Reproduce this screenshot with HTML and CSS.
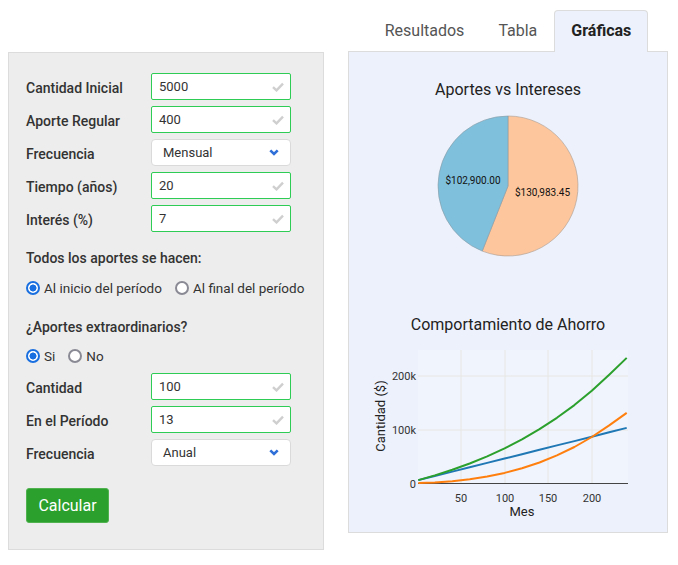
FILE: index.html
```html
<!DOCTYPE html>
<html lang="es">
<head>
<meta charset="utf-8">
<title>Calculadora de ahorro</title>
<link rel="stylesheet" href="styles.css">
</head>
<body>
<div class="page">
  <form class="form-panel">
    <div class="grid">
      <label class="lbl">Cantidad Inicial</label>
      <div class="field ok"><span>5000</span><svg class="check" viewBox="0 0 12 10"><path d="M1 5.2 L4.5 8.4 L11 1.6"/></svg></div>
      <label class="lbl">Aporte Regular</label>
      <div class="field ok"><span>400</span><svg class="check" viewBox="0 0 12 10"><path d="M1 5.2 L4.5 8.4 L11 1.6"/></svg></div>
      <label class="lbl">Frecuencia</label>
      <div class="field sel"><span>Mensual</span><svg class="chev" viewBox="0 0 10 7"><path d="M1.3 1.3 L5 5 L8.7 1.3"/></svg></div>
      <label class="lbl">Tiempo (años)</label>
      <div class="field ok"><span>20</span><svg class="check" viewBox="0 0 12 10"><path d="M1 5.2 L4.5 8.4 L11 1.6"/></svg></div>
      <label class="lbl">Interés (%)</label>
      <div class="field ok"><span>7</span><svg class="check" viewBox="0 0 12 10"><path d="M1 5.2 L4.5 8.4 L11 1.6"/></svg></div>
    </div>

    <div class="heading h1">Todos los aportes se hacen:</div>
    <div class="radios r1">
      <span class="radio on"></span><span class="rtxt">Al inicio del período</span>
      <span class="radio"></span><span class="rtxt">Al final del período</span>
    </div>

    <div class="heading h2">¿Aportes extraordinarios?</div>
    <div class="radios r2">
      <span class="radio on"></span><span class="rtxt">Si</span>
      <span class="radio"></span><span class="rtxt">No</span>
    </div>

    <div class="grid">
      <label class="lbl">Cantidad</label>
      <div class="field ok"><span>100</span><svg class="check" viewBox="0 0 12 10"><path d="M1 5.2 L4.5 8.4 L11 1.6"/></svg></div>
      <label class="lbl">En el Período</label>
      <div class="field ok"><span>13</span><svg class="check" viewBox="0 0 12 10"><path d="M1 5.2 L4.5 8.4 L11 1.6"/></svg></div>
      <label class="lbl">Frecuencia</label>
      <div class="field sel"><span>Anual</span><svg class="chev" viewBox="0 0 10 7"><path d="M1.3 1.3 L5 5 L8.7 1.3"/></svg></div>
    </div>

    <button type="button" class="btn">Calcular</button>
  </form>

  <div class="results">
    <div class="tabs">
      <div class="tab">Resultados</div>
      <div class="tab">Tabla</div>
      <div class="tab active">Gráficas</div>
    </div>
    <div class="panel">
      <div class="ctitle t1">Aportes vs Intereses</div>
      <svg class="pie" viewBox="349 100 318 215" width="318" height="215">
        <path d="M508 186 L508 116 A70 70 0 1 1 482.22 251.08 Z" fill="#fec69c" stroke="#a89a90" stroke-width="0.6"/>
        <path d="M508 186 L482.22 251.08 A70 70 0 0 1 508 116 Z" fill="#7fc0dc" stroke="#8a9aa4" stroke-width="0.6"/>
        <text x="473" y="183.5" class="plab">$102,900.00</text>
        <text x="542.5" y="196" class="plab">$130,983.45</text>
      </svg>
      <div class="ctitle t2">Comportamiento de Ahorro</div>
      <svg class="line" viewBox="349 335 318 190" width="318" height="190">
        <rect x="418" y="350" width="210" height="133" fill="#f0f4fd"/>
        <g class="grid-l">
          <line x1="461" y1="350" x2="461" y2="483"/>
          <line x1="505" y1="350" x2="505" y2="483"/>
          <line x1="548" y1="350" x2="548" y2="483"/>
          <line x1="592" y1="350" x2="592" y2="483"/>
          <line x1="418" y1="376" x2="628" y2="376"/>
          <line x1="418" y1="430" x2="628" y2="430"/>
        </g>
        <line x1="418" y1="483.5" x2="628" y2="483.5" stroke="#444" stroke-width="1"/>
        <g class="ytick">
          <text x="416" y="380">200k</text>
          <text x="416" y="434">100k</text>
          <text x="416" y="487.5">0</text>
        </g>
        <g class="xtick">
          <text x="461" y="502">50</text>
          <text x="505" y="502">100</text>
          <text x="548" y="502">150</text>
          <text x="592" y="502">200</text>
        </g>
        <text class="axl" x="522" y="516">Mes</text>
        <text class="axl" transform="translate(385 416) rotate(-90)" x="0" y="0">Cantidad ($)</text>
        <polyline class="s blue" points="418.3,480.1 434.8,476.0 452.3,471.6 469.7,467.3 487.2,462.9 504.6,458.5 522.0,454.2 539.5,449.8 556.9,445.4 574.4,441.1 591.8,436.7 609.2,432.3 626.7,427.9"/>
        <polyline class="s orange" points="418.3,483 434.8,482.4 452.3,481.2 469.7,479.2 487.2,476.5 504.6,472.9 522.0,468.2 539.5,462.5 556.9,455.4 574.4,447.0 591.8,437.0 609.2,425.4 626.7,412.9"/>
        <polyline class="s green" points="418.3,480.1 434.8,475.4 452.3,469.8 469.7,463.5 487.2,456.4 504.6,448.4 522.0,439.4 539.5,429.2 556.9,417.8 574.4,405.1 591.8,390.7 609.2,374.7 626.7,357.9"/>
      </svg>
    </div>
  </div>
</div>
</body>
</html>
```

FILE: styles.css
```css
* { box-sizing: border-box; }
html, body { margin: 0; padding: 0; background: #fff; }
body { font-family: Roboto, "Liberation Sans", Arial, sans-serif; color: #333; }

.page {
  display: flex;
  align-items: flex-start;
  gap: 24px;
  padding: 10px 0 0 8px;
}

/* ----- left form ----- */
.form-panel {
  width: 316px;
  height: 498px;
  margin-top: 42px;
  background: #ededed;
  border: 1px solid #dcdcdc;
  padding: 20px 17px 0 17px;
  display: flex;
  flex-direction: column;
  align-items: flex-start;
}
.grid {
  display: grid;
  grid-template-columns: 125px 140px;
  row-gap: 6px;
  align-items: center;
}
.lbl {
  font-size: 14px;
  font-weight: 500;
  color: #333;
  line-height: 20px;
  padding-top: 2px;
}
.field {
  height: 27px;
  background: #fff;
  border-radius: 2px;
  display: flex;
  align-items: center;
  justify-content: space-between;
  font-size: 13px;
  color: #333;
}
.field.ok {
  border: 1px solid #2ecc55;
  padding: 0 6px 0 7px;
}
.field.sel {
  border: 1px solid #dadada;
  border-radius: 4px;
  padding: 0 11px 0 11px;
}
.check { width: 12px; height: 10px; }
.check path { fill: none; stroke: #cfcfcf; stroke-width: 2.4; }
.chev { width: 10px; height: 7px; }
.chev path { fill: none; stroke: #2f6fd8; stroke-width: 2.6; }

.heading {
  font-size: 14px;
  font-weight: 500;
  line-height: 20px;
  color: #333;
}
.h1 { margin-top: 16px; }
.h2 { margin-top: 19px; }
.radios {
  display: flex;
  align-items: center;
  height: 20px;
  font-size: 13.5px;
  color: #333;
  white-space: nowrap;
  width: max-content;
}
.r1 { margin-top: 10px; }
.r2 { margin-top: 9px; margin-bottom: 7px; }
.radio {
  width: 14px;
  height: 14px;
  border-radius: 50%;
  border: 2px solid #8a8a95;
  background: #fff;
  margin-right: 4px;
  flex: none;
}
.radio.on {
  border-color: #1a6fe0;
  background: radial-gradient(circle, #1a6fe0 0 3.2px, #fff 3.8px);
}
.rtxt { margin-right: 13px; flex: none; }

.btn {
  margin-top: 22px;
  width: 83px;
  height: 35px;
  background: #2ca02c;
  border: 1px solid #4fb24f;
  border-radius: 3px;
  color: #fff;
  font-family: inherit;
  font-size: 16px;
  padding: 0;
}

/* ----- right results ----- */
.results {
  width: 320px;
  display: flex;
  flex-direction: column;
}
.tabs {
  display: flex;
  justify-content: center;
  height: 42px;
}
.tab {
  padding: 0 16px;
  font-size: 16px;
  line-height: 40px;
  color: #555;
  border: 1px solid transparent;
  border-bottom: none;
}
.tab.active {
  position: relative;
  z-index: 1;
  background: #edf1fb;
  border-color: #dcdcdc;
  border-radius: 4px 4px 0 0;
  color: #222;
  font-weight: 700;
  height: 42px;
}
.panel {
  margin-top: -1px;
  height: 482px;
  background: #edf1fb;
  border: 1px solid #dcdcdc;
  padding-top: 28px;
}
.ctitle {
  text-align: center;
  font-size: 16px;
  line-height: 20px;
  color: #222;
}
.pie, .line { display: block; }
.plab { font-family: Roboto, "Liberation Sans", sans-serif; font-size: 10px; fill: #111; text-anchor: middle; }
.grid-l line { stroke: #e6e6e2; stroke-width: 1; }
.ytick text { font-family: Roboto, sans-serif; font-size: 11px; fill: #333; text-anchor: end; }
.xtick text { font-family: Roboto, sans-serif; font-size: 11px; fill: #333; text-anchor: middle; }
.axl { font-family: Roboto, sans-serif; font-size: 13px; fill: #222; text-anchor: middle; }
.s { fill: none; stroke-width: 2; stroke-linejoin: round; }
.blue { stroke: #1f77b4; }
.orange { stroke: #ff7f0e; }
.green { stroke: #2ca02c; }
```
